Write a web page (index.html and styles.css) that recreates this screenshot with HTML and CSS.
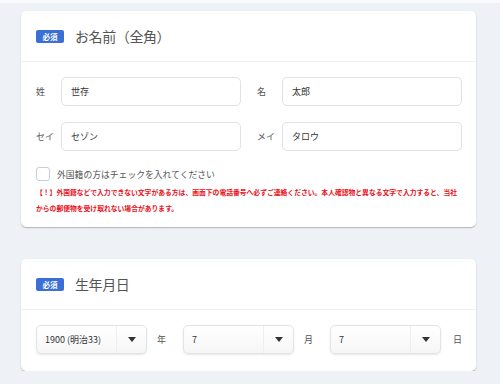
FILE: index.html
```html
<!DOCTYPE html>
<html lang="ja">
<head>
    <meta charset="UTF-8">
    <meta name="viewport" content="width=device-width, initial-scale=1.0">
    <title>お客様情報</title>
    <link rel="stylesheet" href="styles.css">
</head>
<body>
    <div class="page">
        <section class="card">
            <div class="card-header">
                <span class="badge">必須</span>
                <h2 class="card-title">お名前（全角）</h2>
            </div>
            <div class="card-body">
                <div class="name-row">
                    <div class="field">
                        <label class="field-label">姓</label>
                        <input class="text-input" type="text" value="世存">
                    </div>
                    <div class="field">
                        <label class="field-label">名</label>
                        <input class="text-input" type="text" value="太郎">
                    </div>
                </div>
                <div class="name-row">
                    <div class="field">
                        <label class="field-label">セイ</label>
                        <input class="text-input" type="text" value="セゾン">
                    </div>
                    <div class="field">
                        <label class="field-label">メイ</label>
                        <input class="text-input" type="text" value="タロウ">
                    </div>
                </div>
                <label class="check">
                    <span class="check-box"></span>
                    <span>外国籍の方はチェックを入れてください</span>
                </label>
                <p class="notice">【！】外国籍などで入力できない文字がある方は、画面下の電話番号へ必ずご連絡ください。本人確認物と異なる文字で入力すると、当社からの郵便物を受け取れない場合があります。</p>
            </div>
        </section>

        <section class="card">
            <div class="card-header">
                <span class="badge">必須</span>
                <h2 class="card-title">生年月日</h2>
            </div>
            <div class="card-body birth-body">
                <div class="date-row">
                    <div class="select">
                        <span class="select-value">1900 (明治33)</span>
                        <span class="select-arrow"></span>
                    </div>
                    <span class="unit">年</span>
                    <div class="select">
                        <span class="select-value">7</span>
                        <span class="select-arrow"></span>
                    </div>
                    <span class="unit">月</span>
                    <div class="select">
                        <span class="select-value">7</span>
                        <span class="select-arrow"></span>
                    </div>
                    <span class="unit unit-last">日</span>
                </div>
            </div>
        </section>
    </div>
</body>
</html>
```

FILE: styles.css
```css
body {
    margin: 0;
    background-color: #eef2f7;
    border-top: 3px solid #f8fafc;
    font-family: "Noto Sans CJK JP", "Noto Sans", sans-serif;
    color: #444;
}

.page {
    display: flex;
    flex-direction: column;
    gap: 32px;
    padding: 8px 24px 0 21px;
}

.card {
    background: #fff;
    border-radius: 5px;
    box-shadow: 0 1px 1px rgba(0,0,0,0.22), 0 1px 3px rgba(0,0,0,0.06);
}

.card-header {
    display: flex;
    align-items: center;
    gap: 11px;
    height: 50px;
    padding: 0 15px;
    border-bottom: 1px solid #eceef1;
}

.badge {
    display: flex;
    align-items: center;
    justify-content: center;
    width: 28px;
    height: 13px;
    background: #3b6fd6;
    border-radius: 2px;
    color: #fff;
    font-size: 7.5px;
    font-weight: bold;
}

.card-title {
    margin: 0;
    font-size: 14px;
    font-weight: normal;
    color: #555;
    letter-spacing: -0.4px;
}

.card-body {
    display: flex;
    flex-direction: column;
    padding: 15px 14px 11px 15px;
}

.name-row {
    display: flex;
    gap: 16px;
    margin-bottom: 16px;
}

.field {
    flex: 1;
    display: flex;
    align-items: center;
}

.field-label {
    width: 25px;
    font-size: 9px;
    color: #555;
    flex-shrink: 0;
}

.text-input {
    flex: 1;
    min-width: 0;
    height: 29px;
    box-sizing: border-box;
    padding: 0 9px;
    border: 1px solid #dfe2e6;
    border-radius: 5px;
    font-family: inherit;
    font-size: 9px;
    color: #333;
    background: #fff;
}

.check {
    display: flex;
    align-items: center;
    gap: 7px;
    font-size: 8.8px;
    color: #555;
}

.check-box {
    width: 14px;
    height: 14px;
    box-sizing: border-box;
    border: 1px solid #c9ced4;
    border-radius: 3px;
    background: #fff;
}

.notice {
    margin: 3px 0 0;
    font-size: 6.8px;
    line-height: 16px;
    font-weight: bold;
    color: #e8101a;
}

.birth-body {
    padding-bottom: 17px;
}

.date-row {
    display: flex;
    align-items: center;
}

.select {
    display: flex;
    width: 111px;
    height: 29px;
    box-sizing: border-box;
    border: 1px solid #e2e4e7;
    border-radius: 5px;
    background: linear-gradient(#fff, #f6f6f6);
    box-shadow: 0 1px 2px rgba(0,0,0,0.1);
}

.select-value {
    flex: 1;
    display: flex;
    align-items: center;
    padding-left: 8px;
    font-size: 9px;
    color: #333;
}

.select-arrow {
    width: 29px;
    border-left: 1px solid #eeeeee;
    display: flex;
    align-items: center;
    justify-content: center;
}

.select-arrow::after {
    content: "";
    border-left: 4px solid transparent;
    border-right: 4px solid transparent;
    border-top: 5px solid #333;
}

.unit {
    width: 26px;
    padding-left: 10px;
    font-size: 9px;
    color: #555;
}

.unit-last {
    width: auto;
    padding-left: 12px;
}
```
